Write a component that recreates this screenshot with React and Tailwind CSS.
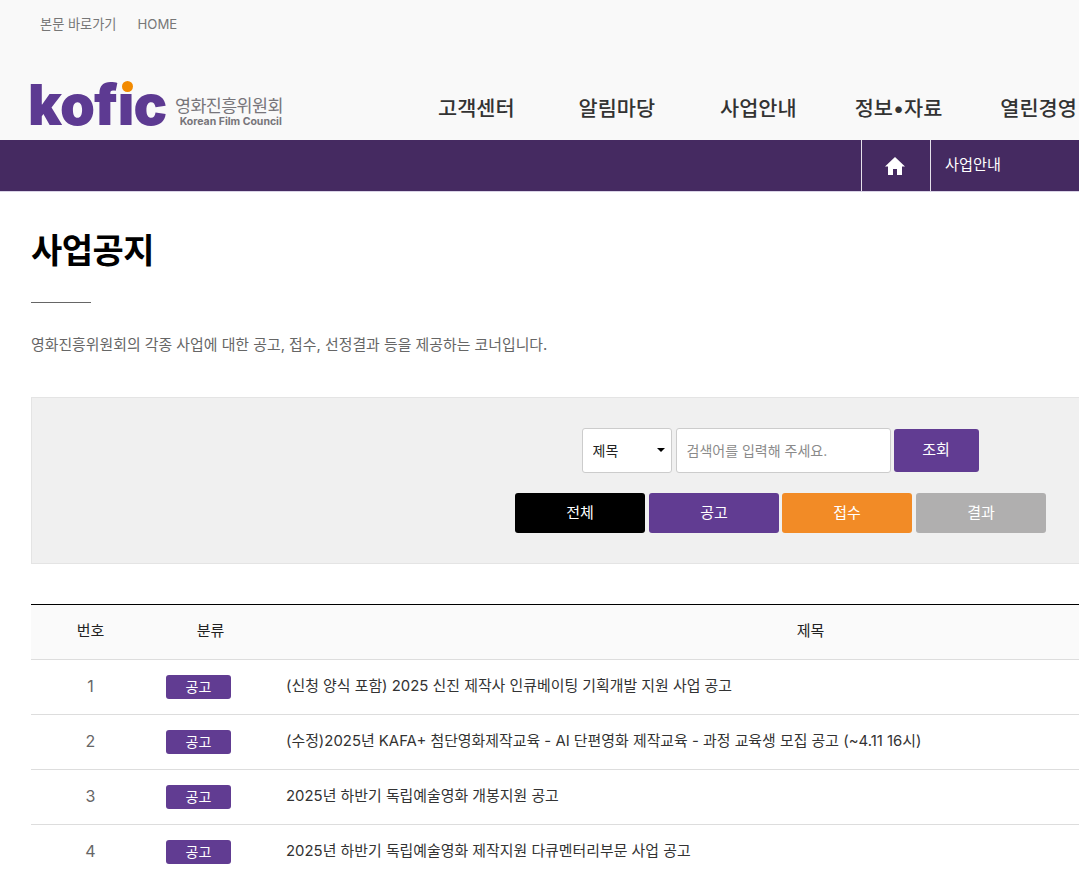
const rows = [
  "(신청 양식 포함) 2025 신진 제작사 인큐베이팅 기획개발 지원 사업 공고",
  "(수정)2025년 KAFA+ 첨단영화제작교육 - AI 단편영화 제작교육 - 과정 교육생 모집 공고 (~4.11 16시)",
  "2025년 하반기 독립예술영화 개봉지원 공고",
  "2025년 하반기 독립예술영화 제작지원 다큐멘터리부문 사업 공고",
];
const filters = [
  ["전체", "bg-black text-white"],
  ["공고", "bg-[#613c92] text-white"],
  ["접수", "-ml-px bg-[#f28b26] text-white"],
  ["결과", "bg-[#b0afaf] text-white"],
];

export default function App() {
  return (
    <div className="h-[878px] w-full overflow-hidden bg-white font-['Inter','Noto_Sans_CJK_KR',sans-serif]">
      <header className="h-[140px] w-[1561px] bg-[#f9f9f9]">
        <div className="flex h-[49px] items-center gap-[21px] pl-[40px] text-[13.2px] text-[#777]">
          <a>본문 바로가기</a>
          <a>HOME</a>
        </div>
        <div className="flex h-[91px] items-start pl-[30px]">
          <div className="flex h-[91px] w-[408px] items-start pt-[32px]">
            <div className="relative h-[48px] w-[137px]">
              <span className="-ml-[2px] block text-[56px] leading-[48px] font-black tracking-[-0.8px] text-[#5d3a92]">kofıc</span>
              <span className="absolute top-0 left-[92px] h-[11px] w-[11px] rounded-full bg-[#f28a00]" />
            </div>
            <div className="ml-[8px] flex flex-col items-end pt-[14px]">
              <span className="text-[17.4px] leading-[22px] tracking-[-0.6px] text-[#77757a]">영화진흥위원회</span>
              <span className="mr-[1px] -mt-px text-[10.5px] leading-[11px] font-bold text-[#77757a]">Korean Film Council</span>
            </div>
          </div>
          <nav className="mt-[43px] flex text-[20.8px] leading-[34px] font-medium whitespace-nowrap text-[#333]">
            <a>고객센터</a>
            <a className="ml-[64px]">알림마당</a>
            <a className="ml-[65px]">사업안내</a>
            <a className="ml-[58px]">정보•자료</a>
            <a className="ml-[58px]">열린경영</a>
          </nav>
        </div>
      </header>

      <div className="flex h-[52px] w-full border-b border-[#d9d3e6] bg-[#452a61] pl-[861px] text-white">
        <div className="flex w-[70px] items-center justify-center border-x border-[#e6e1ea]">
          <svg viewBox="0 0 20 18" className="-ml-[2px] h-[18px] w-[20px]" fill="white" aria-hidden="true">
            <path d="M10 0 L0 9.5 L3 9.5 L3 18 L8 18 L8 12 L12 12 L12 18 L17 18 L17 9.5 L20 9.5 Z" />
          </svg>
        </div>
        <div className="flex items-center pb-[1px] pl-[14px] text-[15.2px]">사업안내</div>
      </div>

      <main className="ml-[31px] w-[1500px]">
        <h1 className="mt-[35px] text-[34px] leading-[48px] font-bold tracking-[-0.5px] text-black">사업공지</h1>
        <div className="mt-[27px] h-px w-[60px] bg-[#666]" />
        <p className="mt-[32px] text-[14.9px] leading-[20px] text-[#666]">
          영화진흥위원회의 각종 사업에 대한 공고, 접수, 선정결과 등을 제공하는 코너입니다.
        </p>

        <section className="mt-[42px] flex h-[167px] flex-col items-center border border-[#e4e4e4] bg-[#f0f0f0] pt-[30px]">
          <div className="mr-[2px] flex h-[45px] items-center">
            <div className="relative h-[45px] w-[90px]">
              <select className="h-full w-full appearance-none rounded-[3px] border border-[#ccc] bg-white pl-[10px] text-[14px] text-[#222]">
                <option>제목</option>
              </select>
              <span className="absolute top-[20px] right-[7px] h-0 w-0 border-x-[4px] border-t-[4px] border-x-transparent border-t-black" />
            </div>
            <input
              className="ml-[4px] h-[45px] w-[215px] rounded-[3px] border border-[#ccc] bg-white pl-[10px] text-[14px] placeholder:text-[#8a8a8a]"
              placeholder="검색어를 입력해 주세요."
            />
            <button className="ml-[3px] h-[43px] w-[85px] rounded-[3px] bg-[#613c92] text-[15px] text-white">조회</button>
          </div>
          <div className="mt-[20px] mr-[1px] flex gap-[4px]">
            {filters.map(([t, c]) => (
              <button key={t} className={`h-[40px] w-[130px] rounded-[3px] text-[15px] ${c}`}>
                {t}
              </button>
            ))}
          </div>
        </section>

        <section className="mt-[40px] border-t border-black">
          <div className="flex h-[55px] items-center border-b border-[#ddd] bg-[#fafafa] pb-[1px] text-[15px] text-[#222]">
            <div className="w-[119px] text-center">번호</div>
            <div className="w-[121px] text-center">분류</div>
            <div className="flex-1 pr-[181px] text-center">제목</div>
          </div>
          {rows.map((r, i) => (
            <div key={r} className="flex h-[55px] items-center border-b border-[#ddd] text-[14.92px]">
              <div className="w-[119px] pb-[2px] text-center text-[16px] text-[#666]">{i + 1}</div>
              <div className="w-[121px] pl-[16px]">
                <span className="flex h-[24px] w-[65px] items-center justify-center rounded-[3px] bg-[#613c92] pb-[2px] text-[14px] text-white">공고</span>
              </div>
              <div className="pb-[1px] pl-[15px] text-[#333]">{r}</div>
            </div>
          ))}
        </section>
      </main>
    </div>
  );
}
